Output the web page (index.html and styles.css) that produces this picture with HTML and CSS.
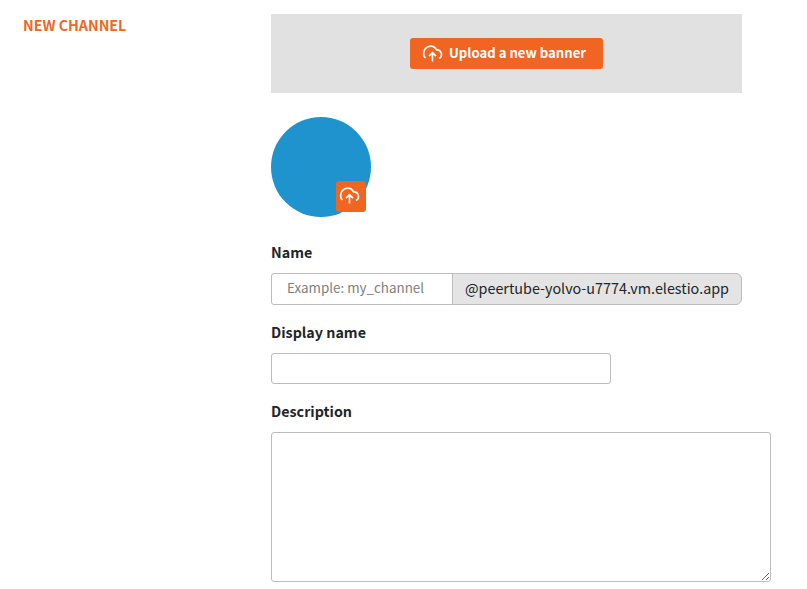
FILE: index.html
```html
<!DOCTYPE html>
<html lang="en">
<head>
<meta charset="utf-8">
<title>New channel</title>
<link rel="stylesheet" href="styles.css">
</head>
<body>
<svg class="defs" aria-hidden="true">
  <symbol id="upload" viewBox="0 0 24 24">
    <path d="M4 17C2.700 16 1.800 14.300 1.800 12.200C1.800 7.500 5.300 3.500 9.800 3.500C12.900 3.500 15.400 5.200 16.700 7.900C19.800 7.600 22.300 10 22.300 13C22.300 15.300 21 17 19.300 17.500M12 21V11.500M8 15L12 11L16 15"/>
  </symbol>
</svg>
<main class="page">
  <h1 class="title">New channel</h1>
  <form class="form">
    <div class="banner">
      <button type="button" class="button"><svg class="icon"><use href="#upload"/></svg><span class="button-label">Upload a new banner</span></button>
    </div>
    <div class="avatar">
      <button type="button" class="avatar-button" aria-label="Upload a new avatar"><svg class="icon"><use href="#upload"/></svg></button>
    </div>
    <div class="field">
      <label for="name"><span class="label-name">Name</span></label>
      <div class="group">
        <input id="name" class="input name-input" placeholder="Example: my_channel">
        <div class="suffix"><span class="host">@peertube-yolvo-u7774.vm.elestio.app</span></div>
      </div>
    </div>
    <div class="field display-field">
      <label for="display"><span>Display name</span></label>
      <input id="display" class="input display-input">
    </div>
    <div class="field description-field">
      <label for="description"><span>Description</span></label>
      <textarea id="description" class="input description"></textarea>
    </div>
  </form>
</main>
</body>
</html>
```
FILE: styles.css
```css
* { box-sizing: border-box; }
body {
  margin: 0;
  background: #fff;
  color: #212529;
  font-family: "Noto Sans CJK SC", "Open Sans", sans-serif;
  font-size: 13.4px;
}
.defs { display: none; }
.page {
  display: grid;
  grid-template-columns: 248px 500px;
  padding: 14px 0 0 23px;
}
.title {
  margin: 0;
  color: #ee6723;
  font-size: 14.25px;
  font-weight: 700;
  line-height: 22px;
  text-transform: uppercase;
}
.form { display: flex; flex-direction: column; }
.banner {
  display: flex;
  justify-content: center;
  align-items: center;
  width: 471px;
  height: 79px;
  background: #e1e1e1;
}
.button, .avatar-button {
  display: flex;
  align-items: center;
  border: 0;
  border-radius: 3px;
  background: #f06522;
  color: #fff;
  font: inherit;
}
.button {
  width: 193px;
  height: 31px;
  padding: 0 0 0 12px;
  gap: 6px;
  font-size: 13.15px;
  font-weight: 700;
  white-space: nowrap;
}
.button-label { padding-bottom: 3px; }
.icon {
  width: 21px;
  height: 21px;
  flex: none;
  fill: none;
  stroke: currentColor;
  stroke-width: 1.9;
}
.avatar {
  position: relative;
  width: 100px;
  height: 100px;
  margin-top: 24px;
  border-radius: 50%;
  background: #1f93cd;
}
.avatar-button {
  position: absolute;
  right: 5px;
  bottom: 5px;
  width: 30px;
  height: 31px;
  padding: 0 0 2px 3px;
}
.field { margin-top: 24px; }
.display-field { margin-top: 16px; }
.description-field { margin-top: 16px; }
label {
  display: block;
  height: 24px;
  margin-bottom: 8px;
  font-size: 14.3px;
  font-weight: 700;
  line-height: 22px;
}
.group { display: flex; height: 32px; }
.input {
  display: block;
  margin: 0;
  border: 1px solid #bcbcbc;
  border-radius: 3px;
  background: #fff;
  color: inherit;
  font: inherit;
}
.name-input {
  width: 182px;
  height: 32px;
  padding: 0 15px 4px;
  border-radius: 3px 0 0 3px;
}
.name-input::placeholder { color: #808080; }
.suffix {
  display: flex;
  align-items: center;
  width: 290px;
  margin-left: -1px;
  padding: 0 0 3px 12px;
  border: 1px solid #bcbcbc;
  border-radius: 0 6px 6px 0;
  background: #e4e4e4;
  font-size: 14.35px;
  white-space: nowrap;
}
.display-input { width: 340px; height: 31px; }
.description { width: 500px; height: 150px; }
```
